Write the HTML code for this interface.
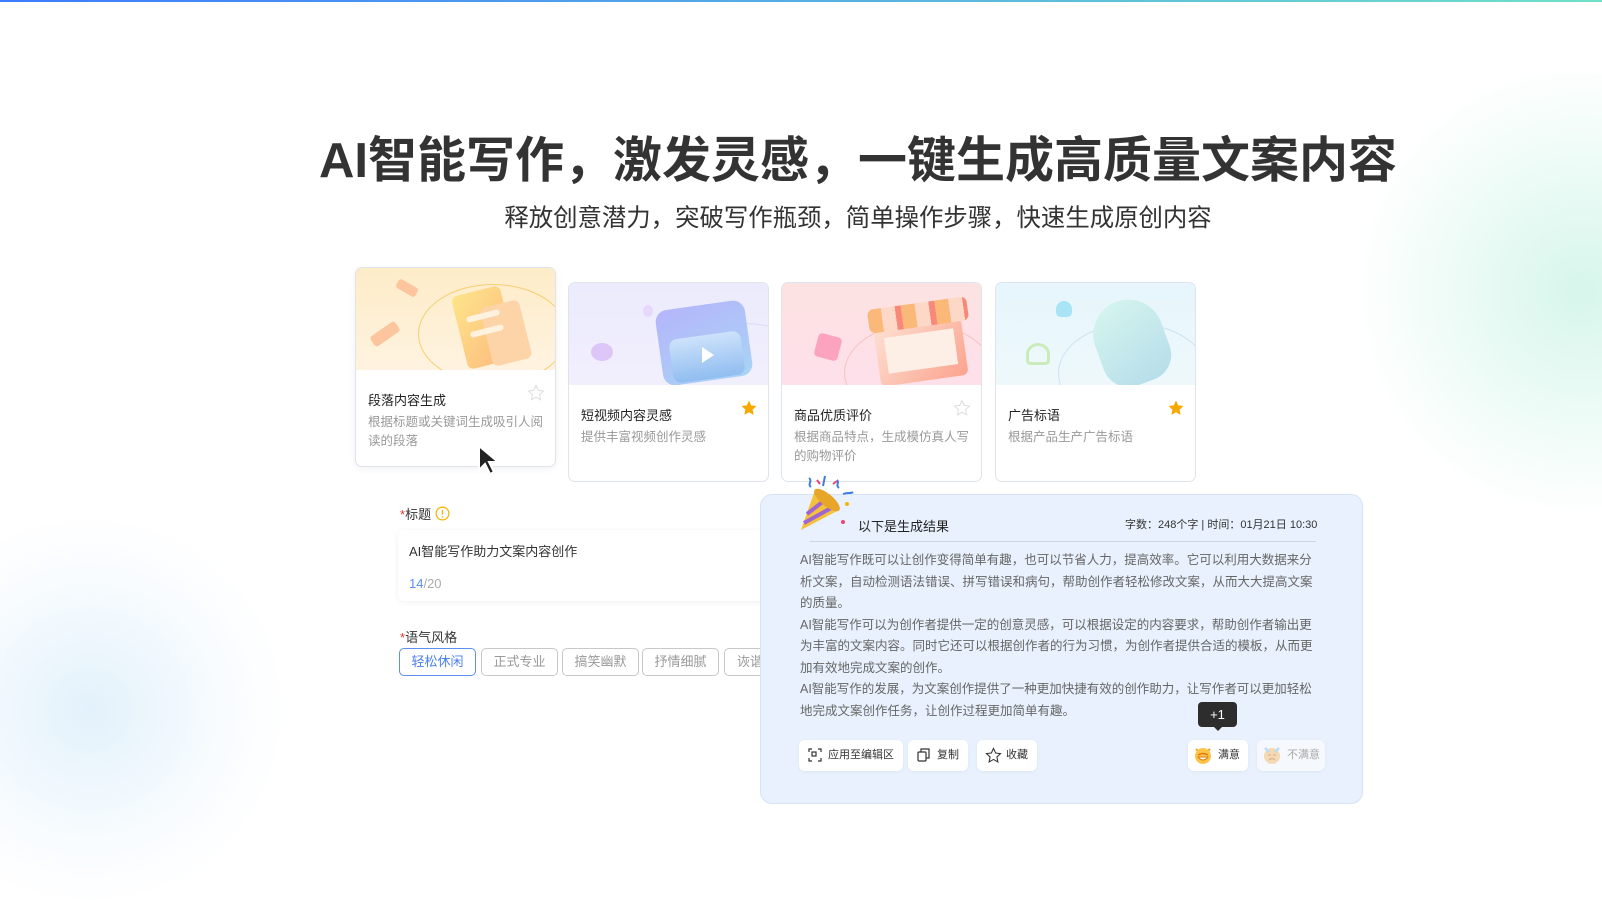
<!DOCTYPE html>
<html><head><meta charset="utf-8"><style>
*{margin:0;padding:0;box-sizing:border-box}
body{width:1602px;height:790px;overflow:hidden;background:#fff;font-family:"Liberation Sans","Noto Sans CJK SC",sans-serif;position:relative;color:#333}
.abs{position:absolute}
.topline{left:0;top:0;width:1602px;height:2px;background:linear-gradient(90deg,#3d7bff,#6fe0c8)}
.blob1{left:1340px;top:70px;width:440px;height:440px;border-radius:50%;background:radial-gradient(circle at 55% 50%,rgba(120,225,190,.3),rgba(160,235,210,.15) 45%,rgba(255,255,255,0) 70%)}
.blob2{left:-120px;top:520px;width:420px;height:380px;border-radius:50%;background:radial-gradient(circle at 50% 50%,rgba(150,205,240,.28),rgba(200,230,250,.14) 45%,rgba(255,255,255,0) 70%)}
h1{position:absolute;left:0;width:1716px;top:121px;text-align:center;font-size:49px;font-weight:bold;color:#333}
.sub{left:0;width:1716px;top:199px;text-align:center;font-size:24.4px;color:#333}
.card{position:absolute;width:201px;height:200px;border:1px solid #dfe3ec;border-radius:7px;background:#fff;overflow:hidden}
.card .img{height:102px;position:relative;overflow:hidden}
.card .t{position:absolute;left:12px;top:122px;font-size:13px;color:#222}
.card .d{position:absolute;left:12px;top:145px;width:177px;font-size:12.5px;color:#999;line-height:19px}
.card .st{position:absolute;right:10px;top:116px}
.lbl{font-size:13px;color:#333}
.lbl b{color:#e33;font-weight:normal}
.tag{position:absolute;top:648px;height:28px;border:1px solid #c8c8c8;border-radius:5px;font-size:13px;color:#999;text-align:center;line-height:26px;width:77px;background:#fff}
.panel{left:760px;top:494px;width:603px;height:310px;background:#e8f1fd;border:1px solid #d7e3f5;border-radius:12px}
.p{position:absolute;left:800px;top:550px;width:516px;font-size:12.5px;line-height:21.5px;color:#666}
.btn{position:absolute;top:740px;height:31px;background:#fff;border-radius:6px;font-size:11px;color:#333;line-height:31px;padding-left:29px;box-shadow:0 1px 3px rgba(0,0,0,.05)}
.btn svg{position:absolute;left:8px;top:7px}
</style></head><body>
<div class="abs topline"></div>
<div class="abs blob1"></div>
<div class="abs blob2"></div>
<h1>AI智能写作，激发灵感，一键生成高质量文案内容</h1>
<div class="abs sub">释放创意潜力，突破写作瓶颈，简单操作步骤，快速生成原创内容</div>

<div class="card" style="left:355px;top:267px;box-shadow:0 2px 8px rgba(0,0,0,.06)">
 <div class="img" style="background:linear-gradient(180deg,#fdecc8,#fff3e0)">
  <div class="abs" style="left:62px;top:16px;width:150px;height:100px;border:1px solid #f5cf70;border-radius:50%"></div>
  <div class="abs" style="left:103px;top:22px;width:50px;height:75px;background:linear-gradient(135deg,#fde58a,#fdb87e);border-radius:6px;transform:rotate(-14deg)"></div>
  <div class="abs" style="left:130px;top:35px;width:40px;height:60px;background:#fdd3a8;border-radius:6px;transform:rotate(-14deg)"></div>
  <div class="abs" style="left:110px;top:45px;width:34px;height:6px;background:#fff3e0;border-radius:3px;transform:rotate(-14deg)"></div>
  <div class="abs" style="left:114px;top:60px;width:34px;height:6px;background:#fff3e0;border-radius:3px;transform:rotate(-14deg)"></div>
  <div class="abs" style="left:40px;top:15px;width:22px;height:10px;background:#fcc59e;border-radius:3px;transform:rotate(30deg)"></div>
  <div class="abs" style="left:14px;top:60px;width:30px;height:12px;background:#fcc59e;border-radius:3px;transform:rotate(-35deg)"></div>
 </div>
 <div class="t">段落内容生成</div>
 <div class="d">根据标题或关键词生成吸引人阅读的段落</div>
 <svg class="st" style="top:116px" width="18" height="18" viewBox="0 0 24 24"><path d="M12 2l3 6.5 7 .8-5.2 4.8 1.4 7L12 17.6 5.8 21.1l1.4-7L2 9.3l7-.8z" fill="none" stroke="#ddd" stroke-width="1.3"/></svg>
</div>
<svg class="abs" style="left:476px;top:444px" width="26" height="34" viewBox="0 0 26 34"><path d="M3 2l0 24 6-6 5 10 4-2-5-10 9 0z" fill="#222" stroke="#fff" stroke-width="2"/></svg>

<div class="card" style="left:568px;top:282px">
 <div class="img" style="background:linear-gradient(180deg,#ebebfd,#f2effd)">
  <div class="abs" style="left:100px;top:40px;width:150px;height:100px;border:1px solid #dcdaf5;border-radius:50%"></div>
  <div class="abs" style="left:90px;top:22px;width:90px;height:76px;background:linear-gradient(160deg,#b5b5fa,#a8d4f5);border-radius:12px;transform:rotate(-8deg)"></div>
  <div class="abs" style="left:102px;top:52px;width:72px;height:44px;background:linear-gradient(180deg,#cde2fb,#90bdf0);border-radius:8px;transform:rotate(-8deg)"></div>
  <div class="abs" style="left:133px;top:64px;width:0;height:0;border-left:12px solid #fff;border-top:8px solid transparent;border-bottom:8px solid transparent"></div>
  <div class="abs" style="left:22px;top:60px;width:22px;height:18px;background:#dcc6f7;border-radius:50%"></div>
  <div class="abs" style="left:74px;top:22px;width:10px;height:12px;background:#e6d8fb;border-radius:50%"></div>
 </div>
 <div class="t">短视频内容灵感</div>
 <div class="d">提供丰富视频创作灵感</div>
 <svg class="st" width="18" height="18" viewBox="0 0 24 24"><path d="M12 2l3 6.5 7 .8-5.2 4.8 1.4 7L12 17.6 5.8 21.1l1.4-7L2 9.3l7-.8z" fill="#f7a900"/></svg>
</div>

<div class="card" style="left:781px;top:282px">
 <div class="img" style="background:linear-gradient(180deg,#fde2e2,#fde0ea)">
  <div class="abs" style="left:62px;top:40px;width:150px;height:100px;border:1px solid #f6c2c0;border-radius:50%"></div>
  <div class="abs" style="left:95px;top:40px;width:88px;height:58px;background:linear-gradient(135deg,#fde0d2,#fca38e);border-radius:6px;transform:rotate(-8deg)"></div>
  <div class="abs" style="left:104px;top:50px;width:70px;height:36px;background:#fdeee6;transform:rotate(-8deg)"></div>
  <div class="abs" style="left:86px;top:20px;width:100px;height:24px;background:repeating-linear-gradient(90deg,#fbb979 0 14px,#fdd8c6 14px 28px,#f8887a 28px 34px);border-radius:6px;transform:rotate(-8deg)"></div>
  <div class="abs" style="left:34px;top:52px;width:24px;height:24px;background:#fca3c0;border-radius:4px;transform:rotate(15deg)"></div>
 </div>
 <div class="t">商品优质评价</div>
 <div class="d">根据商品特点，生成模仿真人写的购物评价</div>
 <svg class="st" width="18" height="18" viewBox="0 0 24 24"><path d="M12 2l3 6.5 7 .8-5.2 4.8 1.4 7L12 17.6 5.8 21.1l1.4-7L2 9.3l7-.8z" fill="none" stroke="#ddd" stroke-width="1.3"/></svg>
</div>

<div class="card" style="left:995px;top:282px">
 <div class="img" style="background:linear-gradient(180deg,#e6f6fc,#eef8fb)">
  <div class="abs" style="left:62px;top:40px;width:150px;height:100px;border:1px solid #cde3f3;border-radius:50%"></div>
  <div class="abs" style="left:100px;top:16px;width:70px;height:86px;background:linear-gradient(160deg,#d6f6ee,#b5dcea);border-radius:40px 40px 30px 30px;transform:rotate(-20deg)"></div>
  <div class="abs" style="left:30px;top:60px;width:24px;height:22px;border:3px solid #c9ecb8;border-radius:50% 50% 20% 20%"></div>
  <div class="abs" style="left:60px;top:18px;width:16px;height:16px;background:#a8e4f5;border-radius:50% 50% 30% 30%"></div>
 </div>
 <div class="t">广告标语</div>
 <div class="d">根据产品生产广告标语</div>
 <svg class="st" width="18" height="18" viewBox="0 0 24 24"><path d="M12 2l3 6.5 7 .8-5.2 4.8 1.4 7L12 17.6 5.8 21.1l1.4-7L2 9.3l7-.8z" fill="#f7a900"/></svg>
</div>

<div class="abs lbl" style="left:400px;top:504px"><b>*</b>标题 <svg width="15" height="15" viewBox="0 0 16 16" style="vertical-align:-2px"><circle cx="8" cy="8" r="6.8" fill="none" stroke="#f5b400" stroke-width="1.3"/><path d="M8 4.2v5" stroke="#f5b400" stroke-width="1.5"/><circle cx="8" cy="11.5" r=".9" fill="#f5b400"/></svg></div>
<div class="abs" style="left:398px;top:530px;width:380px;height:71px;background:#fff;border-radius:6px;box-shadow:0 1px 6px rgba(0,0,0,.06)"></div>
<div class="abs" style="left:409px;top:541px;font-size:13px;color:#333">AI智能写作助力文案内容创作</div>
<div class="abs" style="left:409px;top:576px;font-size:13px;color:#aaa"><span style="color:#5b8ff0">14</span>/20</div>
<div class="abs lbl" style="left:400px;top:627px"><b>*</b>语气风格</div>
<div class="tag" style="left:399px;border-color:#5b8ff0;color:#4a80ee">轻松休闲</div>
<div class="tag" style="left:481px">正式专业</div>
<div class="tag" style="left:562px">搞笑幽默</div>
<div class="tag" style="left:642px">抒情细腻</div>
<div class="tag" style="left:724px;width:60px;text-align:left;padding-left:12px">诙谐</div>

<div class="abs panel"></div>
<svg class="abs" style="left:795px;top:474px" width="62" height="62" viewBox="0 0 62 62">
 <path d="M6 56 L20 16 L44 36 Z" fill="#f3c23a"/>
 <path d="M12 40 L30 26 M9 49 L38 33" stroke="#a066d0" stroke-width="4"/>
 <ellipse cx="32" cy="26" rx="16" ry="6" transform="rotate(40 32 26)" fill="#e7a52a"/>
 <path d="M14 4c4 3-2 6 2 9M30 2l-2 10M42 6c3 3-2 5 2 8M48 20c5-2 8 0 10-2" stroke="#3d7fe0" stroke-width="2" fill="none"/>
 <path d="M22 6l3 4M38 10l4-3" stroke="#e9447a" stroke-width="2"/>
 <circle cx="52" cy="30" r="2" fill="#f5b400"/><circle cx="48" cy="48" r="2" fill="#e9447a"/>
</svg>
<div class="abs" style="left:858px;top:516px;font-size:13px;color:#222">以下是生成结果</div>
<div class="abs" style="left:1125px;top:516px;font-size:11px;color:#333">字数：248个字 | 时间：01月21日 10:30</div>
<div class="abs" style="left:810px;top:541px;width:506px;height:1px;background:#cdd6e3"></div>
<div class="p">AI智能写作既可以让创作变得简单有趣，也可以节省人力，提高效率。它可以利用大数据来分析文案，自动检测语法错误、拼写错误和病句，帮助创作者轻松修改文案，从而大大提高文案的质量。<br>AI智能写作可以为创作者提供一定的创意灵感，可以根据设定的内容要求，帮助创作者输出更为丰富的文案内容。同时它还可以根据创作者的行为习惯，为创作者提供合适的模板，从而更加有效地完成文案的创作。<br>AI智能写作的发展，为文案创作提供了一种更加快捷有效的创作助力，让写作者可以更加轻松地完成文案创作任务，让创作过程更加简单有趣。</div>

<div class="abs" style="left:1198px;top:702px;width:39px;height:25px;background:#2d2d2d;border-radius:4px;color:#fff;font-size:13px;text-align:center;line-height:25px">+1</div>
<div class="abs" style="left:1213px;top:726px;width:0;height:0;border-left:5px solid transparent;border-right:5px solid transparent;border-top:5px solid #2d2d2d"></div>

<div class="btn" style="left:799px;width:104px"><svg width="16" height="16" viewBox="0 0 16 16" fill="none" stroke="#333" stroke-width="1.2"><path d="M2 5V2h3M2 11v3h3M11 2h3v3M11 14h3v-3"/><rect x="5" y="5" width="4" height="4"/></svg>应用至编辑区</div>
<div class="btn" style="left:908px;width:60px"><svg width="16" height="16" viewBox="0 0 16 16" fill="none" stroke="#333" stroke-width="1.2"><rect x="2" y="5" width="8" height="9" rx="1"/><path d="M5 5V2h8v9h-3"/></svg>复制</div>
<div class="btn" style="left:977px;width:60px"><svg width="17" height="17" viewBox="0 0 24 24"><path d="M12 2l3 6.5 7 .8-5.2 4.8 1.4 7L12 17.6 5.8 21.1l1.4-7L2 9.3l7-.8z" fill="none" stroke="#333" stroke-width="1.5"/></svg>收藏</div>
<div class="btn" style="left:1188px;width:60px;padding-left:30px"><svg width="20" height="20" viewBox="0 0 20 20" style="left:5px;top:5px"><path d="M3 4l3 3M17 4l-3 3" stroke="#f3a020" stroke-width="2"/><circle cx="10" cy="11" r="8" fill="#fcc449"/><path d="M5 10q5-3 10 0" stroke="#e07a10" stroke-width="1.4" fill="none"/><path d="M5 12q5 6 10 0z" fill="#fff" stroke="#e07a10"/></svg>满意</div>
<div class="btn" style="left:1257px;width:68px;padding-left:30px;color:#aaa;background:#f5f8fc"><svg width="20" height="20" viewBox="0 0 20 20" style="left:5px;top:5px;opacity:.55"><circle cx="10" cy="11" r="8" fill="#f3c07a"/><path d="M3 3l4 4M17 3l-4 4" stroke="#8cc7e8" stroke-width="2.5"/><path d="M6 10h3M11 10h3" stroke="#c07030"/><path d="M7 15q3-3 6 0" stroke="#c07030" fill="none"/></svg>不满意</div>
</body></html>
